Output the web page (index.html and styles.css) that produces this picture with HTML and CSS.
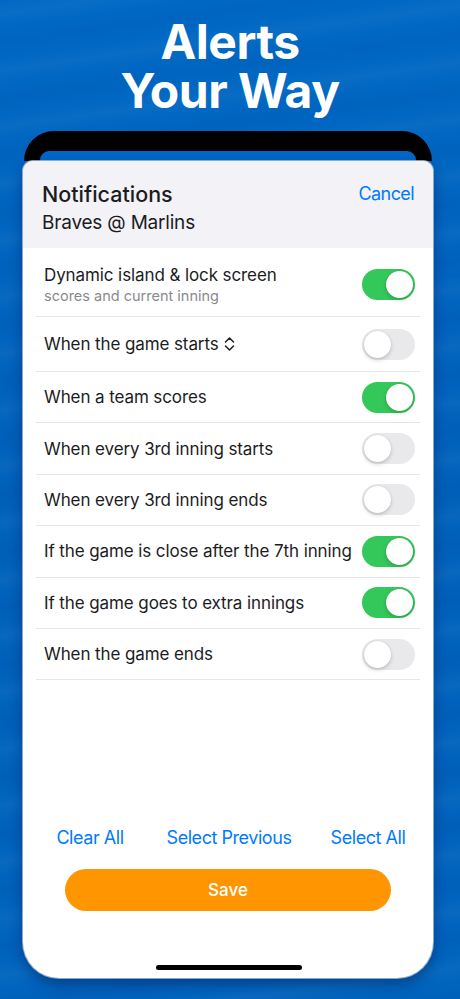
FILE: index.html
```html
<!DOCTYPE html>
<html>
<head>
<meta charset="utf-8">
<link rel="stylesheet" href="styles.css">
</head>
<body>
<div class="stage">
  <h1 class="title"><span class="title-line">Alerts</span><span class="title-line">Your Way</span></h1>
  <div class="device">
    <div class="bezel"><div class="screen-top"></div></div>
    <div class="sheet">
      <div class="sheet-header">
        <div class="header-text">
          <div class="header-title">Notifications</div>
          <div class="header-sub">Braves @ Marlins</div>
        </div>
        <div class="cancel">Cancel</div>
      </div>
      <div class="list">
        <div class="row row-tall">
          <div class="row-text">
            <div class="row-label">Dynamic island &amp; lock screen</div>
            <div class="row-sub">scores and current inning</div>
          </div>
          <div class="toggle on"><div class="knob"></div></div>
        </div>
        <div class="row row-mid">
          <div class="row-label with-icon">When the game starts
            <svg class="updown" width="11" height="16" viewBox="0 0 11 16"><path d="M1.5 6 L5.5 2 L9.5 6 M1.5 10 L5.5 14 L9.5 10" fill="none" stroke="#1c1c1e" stroke-width="1.5" stroke-linecap="round" stroke-linejoin="round"/></svg>
          </div>
          <div class="toggle"><div class="knob"></div></div>
        </div>
        <div class="row">
          <div class="row-label">When a team scores</div>
          <div class="toggle on"><div class="knob"></div></div>
        </div>
        <div class="row">
          <div class="row-label">When every 3rd inning starts</div>
          <div class="toggle"><div class="knob"></div></div>
        </div>
        <div class="row">
          <div class="row-label">When every 3rd inning ends</div>
          <div class="toggle"><div class="knob"></div></div>
        </div>
        <div class="row">
          <div class="row-label">If the game is close after the 7th inning</div>
          <div class="toggle on"><div class="knob"></div></div>
        </div>
        <div class="row">
          <div class="row-label">If the game goes to extra innings</div>
          <div class="toggle on"><div class="knob"></div></div>
        </div>
        <div class="row">
          <div class="row-label">When the game ends</div>
          <div class="toggle"><div class="knob"></div></div>
        </div>
      </div>
      <div class="spacer"></div>
      <div class="links">
        <div class="link">Clear All</div>
        <div class="link">Select Previous</div>
        <div class="link">Select All</div>
      </div>
      <div class="save">Save</div>
      <div class="home-indicator"></div>
    </div>
  </div>
</div>
</body>
</html>
```

FILE: styles.css
```css
* { box-sizing: border-box; }
html, body { margin: 0; padding: 0; }
body {
  width: 460px;
  height: 999px;
  overflow: hidden;
  font-family: Inter, "Liberation Sans", sans-serif;
  background: #0063bf;
}
.stage {
  width: 460px;
  height: 999px;
  overflow: hidden;
  background:
    repeating-linear-gradient(172deg, rgba(255,255,255,0) 0px, rgba(255,255,255,0.035) 14px, rgba(255,255,255,0) 28px, rgba(0,0,60,0.03) 42px, rgba(255,255,255,0) 56px),
    linear-gradient(180deg, #0068c4 0%, #0061bb 50%, #0064be 100%);
  padding-top: 17px;
}
.title {
  margin: 0;
  text-align: center;
  color: #ffffff;
  font-family: Inter, "Liberation Sans", sans-serif;
  font-weight: 700;
  font-size: 48px;
  letter-spacing: -0.5px;
}
.title-line {
  display: block;
  height: 49px;
  line-height: 49px;
}
.device {
  margin: 16px 0 0 23px;
  width: 410px;
}
.bezel {
  margin: 0 1px;
  height: 30px;
  background: #000000;
  border-radius: 42px 42px 0 0;
  padding: 20px 16px 0 16px;
}
.screen-top {
  height: 10px;
  background: #0068c9;
  border-radius: 9px 9px 0 0;
}
.sheet {
  height: 817px;
  background: #ffffff;
  border-radius: 10px 10px 36px 36px;
  box-shadow: 0 0 0 1px rgba(170, 190, 215, 0.8), 0 6px 14px rgba(0, 20, 70, 0.45);
  display: flex;
  flex-direction: column;
  overflow: hidden;
}
.sheet-header {
  height: 87px;
  background: #f2f2f7;
  display: flex;
  justify-content: space-between;
  align-items: flex-start;
  padding: 20px 19px 0 19px;
}
.header-title {
  font-size: 21.5px;
  font-weight: 500;
  color: #1c1c1e;
  line-height: 26px;
  letter-spacing: 0;
}
.header-sub {
  font-size: 19px;
  color: #1c1c1e;
  line-height: 26px;
  margin-top: 3px;
  letter-spacing: -0.2px;
}
.cancel {
  font-size: 18px;
  color: #007aff;
  line-height: 26px;
  letter-spacing: -0.6px;
}
.list {
  padding: 0 13px;
}
.row {
  height: 51.4px;
  border-bottom: 1px solid #e5e5ea;
  display: flex;
  align-items: center;
  justify-content: space-between;
  padding: 0 5px 0 8px;
}
.row-tall { height: 69px; padding-top: 5px; }
.row-mid { height: 55px; }
.row-label {
  font-size: 17px;
  color: #1c1c1e;
  letter-spacing: -0.1px;
  white-space: nowrap;
}
.row-sub {
  font-size: 14.5px;
  color: #8a8a8e;
  letter-spacing: 0;
  margin-top: 2px;
}
.with-icon {
  display: flex;
  align-items: center;
  gap: 5px;
}
.updown { display: block; }
.toggle {
  width: 53px;
  height: 31px;
  border-radius: 16px;
  background: #e9e9eb;
  padding: 2px;
  flex: none;
  display: flex;
  justify-content: flex-start;
}
.toggle.on {
  background: #34c759;
  justify-content: flex-end;
}
.knob {
  width: 27px;
  height: 27px;
  border-radius: 50%;
  background: #ffffff;
  box-shadow: 0 2px 4px rgba(0,0,0,0.18), 0 0 1px rgba(0,0,0,0.15);
}
.spacer { flex: 1; }
.links {
  display: grid;
  grid-template-columns: 139px 139px 139px;
  justify-content: center;
  padding-left: 2px;
  margin-bottom: -2px;
}
.link {
  text-align: center;
  font-size: 18px;
  color: #007aff;
  letter-spacing: -0.45px;
  line-height: 24px;
}
.save {
  margin: 21px 0 0 42px;
  width: 326px;
  height: 42px;
  border-radius: 21px;
  background: #ff9500;
  color: #ffffff;
  font-size: 17px;
  font-weight: 500;
  display: flex;
  align-items: center;
  justify-content: center;
}
.home-indicator {
  margin: 54px auto 8px 133px;
  width: 146px;
  height: 5px;
  border-radius: 3px;
  background: #000000;
}
```
